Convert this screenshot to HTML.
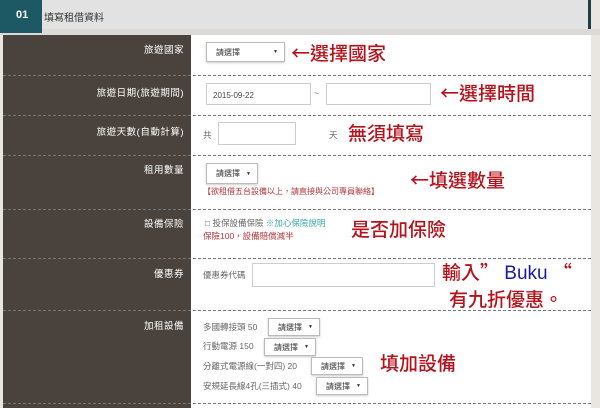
<!DOCTYPE html>
<html><head><meta charset="utf-8"><style>
*{margin:0;padding:0;box-sizing:border-box}
body{width:600px;height:408px;overflow:hidden;position:relative;background:#e9e6e2;font-family:"Liberation Sans","Noto Sans CJK TC",sans-serif}
.a{position:absolute;white-space:nowrap}
.lab{position:absolute;right:416px;color:#fff;font-size:9.5px;letter-spacing:.5px}
.dash{position:absolute;left:3px;width:588px;border-top:1px dashed #777}
.box{position:absolute;border:1px solid #ccc;background:#fff;font-size:8px;color:#444}
.sel{position:absolute;border:1px solid #bbb;background:#fff;font-size:8px;color:#333;padding-left:9px;line-height:17px;box-shadow:0 1px 2px #ccc}
.sel:after{content:"▼";position:absolute;right:6px;font-size:5px}
.red{position:absolute;color:#b5121b;font-size:19px;white-space:nowrap;font-weight:500;font-family:"Noto Sans CJK TC",sans-serif;line-height:24px}
.g{font-size:8.5px;color:#666}
</style></head><body>
<div class="a" style="left:42px;top:0;width:546px;height:29px;background:#e2e2e2"></div>
<div class="a" style="left:588px;top:0;width:3px;height:29px;background:#1f3d44"></div>
<div class="a" style="left:0;top:29px;width:600px;height:6px;background:#dcdad7"></div>
<div class="a" style="left:0;top:0;width:42px;height:33px;background:#1d5965;color:#fff;font-weight:bold;font-size:11px;line-height:31px;padding-left:16px">01</div>
<div class="a" style="left:44px;top:9px;font-size:10px;color:#333">填寫租借資料</div>
<div class="a" style="left:3px;top:35px;width:188px;height:373px;background:#4a433d"></div>
<div class="a" style="left:191px;top:35px;width:400px;height:373px;background:#fff"></div>
<div class="dash" style="top:75px"></div><div class="dash" style="top:115px"></div><div class="dash" style="top:155px"></div><div class="dash" style="top:209px"></div><div class="dash" style="top:258px"></div><div class="dash" style="top:310px"></div><div class="dash" style="top:403px"></div>

<div class="lab" style="top:42px">旅遊國家</div>
<div class="sel" style="left:206px;top:42px;width:79px;height:20px;line-height:19px">請選擇</div>
<div class="red" style="left:291px;top:41px">←選擇國家</div>

<div class="lab" style="top:85px">旅遊日期(旅遊期間)</div>
<div class="box" style="left:206px;top:83px;width:105px;height:22px;padding:7px 6px">2015-09-22</div>
<div class="a g" style="left:314px;top:88px">~</div>
<div class="box" style="left:326px;top:83px;width:105px;height:22px"></div>
<div class="red" style="left:440px;top:81px">←選擇時間</div>

<div class="lab" style="top:124px">旅遊天數(自動計算)</div>
<div class="a g" style="left:203px;top:129px">共</div>
<div class="box" style="left:218px;top:122px;width:78px;height:23px"></div>
<div class="a g" style="left:329px;top:129px">天</div>
<div class="red" style="left:348px;top:121px">無須填寫</div>

<div class="lab" style="top:162px">租用數量</div>
<div class="sel" style="left:206px;top:163px;width:52px;height:21px;line-height:20px">請選擇</div>
<div class="a" style="left:203px;top:186px;font-size:8px;color:#b5343a">【欲租借五台設備以上，請直接與公司專員聯絡】</div>
<div class="red" style="left:410px;top:168px">←填選數量</div>

<div class="lab" style="top:216px">設備保險</div>
<div class="a g" style="left:205px;top:217px">□ 投保設備保險 <span style="color:#3aa6a8">※加心保險說明</span></div>
<div class="a" style="left:203px;top:230px;font-size:8.5px;color:#b5343a">保險100，設備賠償減半</div>
<div class="red" style="left:351px;top:217px">是否加保險</div>

<div class="lab" style="top:266px">優惠券</div>
<div class="a g" style="left:203px;top:269px">優惠券代碼</div>
<div class="box" style="left:252px;top:263px;width:183px;height:24px"></div>
<div class="red" style="left:442px;top:260px">輸入”<span style="color:#1a1aa8;font-family:'Liberation Sans',sans-serif"> Buku </span>“</div>
<div class="red" style="left:449px;top:287px">有九折優惠。</div>

<div class="lab" style="top:318px">加租設備</div>
<div class="a g" style="left:203px;top:321px">多國轉接頭 50</div>
<div class="sel" style="left:268px;top:318px;width:52px;height:18px">請選擇</div>
<div class="a g" style="left:203px;top:340px">行動電源 150</div>
<div class="sel" style="left:264px;top:338px;width:52px;height:18px">請選擇</div>
<div class="a g" style="left:203px;top:360px">分離式電源線(一對四) 20</div>
<div class="sel" style="left:311px;top:357px;width:52px;height:18px">請選擇</div>
<div class="a g" style="left:203px;top:380px">安規延長線4孔(三插式) 40</div>
<div class="sel" style="left:316px;top:377px;width:52px;height:18px">請選擇</div>
<div class="red" style="left:380px;top:351px">填加設備</div>
</body></html>
